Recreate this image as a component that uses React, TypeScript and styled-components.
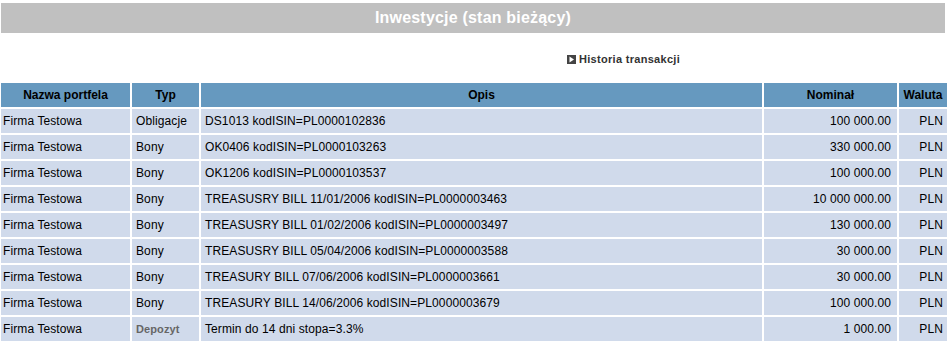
import styled, { createGlobalStyle } from "styled-components";

const GlobalStyle = createGlobalStyle`
  body {
    margin: 0;
    background: #ffffff;
    font-family: "Liberation Sans", Arial, sans-serif;
  }
`;

const Page = styled.div`
  width: 948px;
  padding-top: 3px;
`;

const Title = styled.h1`
  margin: 0 3px 0 1px;
  height: 30px;
  line-height: 30px;
  background: #c0c0c0;
  color: #ffffff;
  font-size: 16px;
  font-weight: bold;
  letter-spacing: 0.2px;
  text-align: center;
`;

const LinkRow = styled.div`
  height: 48px;
  box-sizing: border-box;
  padding: 20px 0 0 567px;
  display: flex;
  align-items: flex-start;
`;

const HistoryLink = styled.a`
  display: flex;
  align-items: center;
  gap: 3px;
  height: 12px;
  color: #333333;
  font-size: 11px;
  font-weight: bold;
  letter-spacing: 0.3px;
  text-decoration: none;
  cursor: pointer;
`;

const Table = styled.table`
  width: 950px;
  margin-left: -1px;
  table-layout: fixed;
  border-collapse: separate;
  border-spacing: 2px;
  font-size: 12px;
  letter-spacing: 0.1px;
`;

const Th = styled.th`
  height: 24px;
  padding: 0;
  background: #6699bf;
  color: #000000;
  font-size: 12px;
  font-weight: bold;
  letter-spacing: 0;
  text-align: center;
`;

interface CellProps {
  $align?: "left" | "right";
  $pad?: number;
}

const Td = styled.td<CellProps>`
  height: 24px;
  padding: 0 ${(p) => (p.$align === "right" ? p.$pad ?? 4 : 0)}px 0
    ${(p) => (p.$align === "right" ? 0 : p.$pad ?? 4)}px;
  background: #d0daeb;
  color: #000000;
  text-align: ${(p) => p.$align ?? "left"};
  white-space: nowrap;
  overflow: hidden;
`;

const Deposit = styled.span`
  color: #666666;
  font-size: 11px;
  font-weight: bold;
`;

interface Investment {
  portfolio: string;
  type: string;
  description: string;
  nominal: string;
  currency: string;
}

const investments: Investment[] = [
  { portfolio: "Firma Testowa", type: "Obligacje", description: "DS1013 kodISIN=PL0000102836", nominal: "100 000.00", currency: "PLN" },
  { portfolio: "Firma Testowa", type: "Bony", description: "OK0406 kodISIN=PL0000103263", nominal: "330 000.00", currency: "PLN" },
  { portfolio: "Firma Testowa", type: "Bony", description: "OK1206 kodISIN=PL0000103537", nominal: "100 000.00", currency: "PLN" },
  { portfolio: "Firma Testowa", type: "Bony", description: "TREASUSRY BILL 11/01/2006 kodISIN=PL0000003463", nominal: "10 000 000.00", currency: "PLN" },
  { portfolio: "Firma Testowa", type: "Bony", description: "TREASUSRY BILL 01/02/2006 kodISIN=PL0000003497", nominal: "130 000.00", currency: "PLN" },
  { portfolio: "Firma Testowa", type: "Bony", description: "TREASUSRY BILL 05/04/2006 kodISIN=PL0000003588", nominal: "30 000.00", currency: "PLN" },
  { portfolio: "Firma Testowa", type: "Bony", description: "TREASURY BILL 07/06/2006 kodISIN=PL0000003661", nominal: "30 000.00", currency: "PLN" },
  { portfolio: "Firma Testowa", type: "Bony", description: "TREASURY BILL 14/06/2006 kodISIN=PL0000003679", nominal: "100 000.00", currency: "PLN" },
  { portfolio: "Firma Testowa", type: "Depozyt", description: "Termin do 14 dni stopa=3.3%", nominal: "1 000.00", currency: "PLN" },
];

const PlayIcon = () => (
  <svg width="9" height="9" viewBox="0 0 9 9">
    <rect width="9" height="9" fill="#444444" />
    <path d="M2.5 1.5 L7 4.5 L2.5 7.5 Z" fill="#ffffff" />
  </svg>
);

const App = () => {
  return (
    <Page>
      <GlobalStyle />
      <Title>Inwestycje (stan bieżący)</Title>
      <LinkRow>
        <HistoryLink>
          <PlayIcon />
          Historia transakcji
        </HistoryLink>
      </LinkRow>
      <Table>
        <colgroup>
          <col style={{ width: 129 }} />
          <col style={{ width: 67 }} />
          <col style={{ width: 561 }} />
          <col style={{ width: 133 }} />
          <col />
        </colgroup>
        <thead>
          <tr>
            <Th>Nazwa portfela</Th>
            <Th>Typ</Th>
            <Th>Opis</Th>
            <Th>Nominał</Th>
            <Th>Waluta</Th>
          </tr>
        </thead>
        <tbody>
          {investments.map((item, i) => (
            <tr key={i}>
              <Td $pad={2}>{item.portfolio}</Td>
              <Td>
                {item.type === "Depozyt" ? <Deposit>{item.type}</Deposit> : item.type}
              </Td>
              <Td>{item.description}</Td>
              <Td $align="right" $pad={6}>{item.nominal}</Td>
              <Td $align="right" $pad={4}>{item.currency}</Td>
            </tr>
          ))}
        </tbody>
      </Table>
    </Page>
  );
};

export default App;
